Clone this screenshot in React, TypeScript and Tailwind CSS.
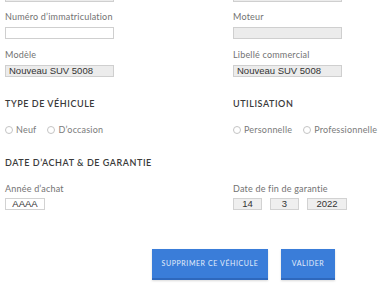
import React from "react";

const labelCls =
  "block h-[12px] leading-[12px] text-[9px] tracking-[0.2px] text-[#727272] font-['Lato',sans-serif]";
const headingCls =
  "h-[12px] leading-[12px] text-[9px] tracking-[0.55px] font-semibold text-[#3a3a3a] font-['Lato',sans-serif]";

const Field = ({
  label,
  value,
  disabled,
}: {
  label: string;
  value?: string;
  disabled?: boolean;
}) => (
  <div className="flex flex-col">
    <span className={labelCls}>{label}</span>
    <div
      className={`mt-[4px] h-[12px] w-[109px] border border-[#cfcfcf] pl-[3px] text-[9.5px] leading-[10px] text-[#333] font-['Liberation_Sans',Arial,sans-serif] ${
        disabled ? "bg-[#ececec]" : "bg-white"
      }`}
    >
      {value}
    </div>
  </div>
);

const Radio = ({ label }: { label: string }) => (
  <label className="flex items-center gap-[3px] text-[9px] tracking-[0.2px] text-[#7a7a7a] font-['Lato',sans-serif]">
    <span className="w-[8px] h-[8px] rounded-full border border-[#c4c4c4] bg-white" />
    {label}
  </label>
);

const SmallBox = ({ value, w }: { value: string; w: string }) => (
  <div
    className={`${w} h-[12px] border border-[#d2d2d2] bg-[#efefef] text-center text-[9.5px] leading-[10px] text-[#333] font-['Liberation_Sans',Arial,sans-serif]`}
  >
    {value}
  </div>
);

const App = () => {
  return (
    <div className="w-[383px] h-[300px] overflow-hidden bg-white">
      <div className="grid grid-cols-[228px_1fr] pl-[5px]">
        {/* left column */}
        <div className="flex flex-col">
          <div className="-mt-[10px] h-[12px] w-[109px] border border-[#cfcfcf] bg-[#ececec]" />
          <div className="mt-[9px]">
            <Field label="Numéro d’immatriculation" />
          </div>
          <div className="mt-[10px]">
            <Field label="Modèle" value="Nouveau SUV 5008" disabled />
          </div>
        </div>
        {/* right column */}
        <div className="flex flex-col">
          <div className="-mt-[10px] h-[12px] w-[109px] border border-[#cfcfcf] bg-[#ececec]" />
          <div className="mt-[9px]">
            <Field label="Moteur" disabled />
          </div>
          <div className="mt-[10px]">
            <Field label="Libellé commercial" value="Nouveau SUV 5008" disabled />
          </div>
        </div>

        <div className="mt-[21px]">
          <div className={headingCls}>TYPE DE VÉHICULE</div>
          <div className="mt-[14px] flex h-[12px] items-center gap-[11px]">
            <Radio label="Neuf" />
            <Radio label="D’occasion" />
          </div>
        </div>
        <div className="mt-[21px]">
          <div className={headingCls}>UTILISATION</div>
          <div className="mt-[14px] flex h-[12px] items-center gap-[11px]">
            <Radio label="Personnelle" />
            <Radio label="Professionnelle" />
          </div>
        </div>

        <div className="col-span-2 mt-[21px]">
          <div className={headingCls}>DATE D’ACHAT &amp; DE GARANTIE</div>
        </div>

        <div className="mt-[14px] flex flex-col">
          <span className={labelCls}>Année d’achat</span>
          <div className="mt-[3px]">
            <SmallBox value="AAAA" w="w-[40px] !bg-white" />
          </div>
        </div>
        <div className="mt-[14px] flex flex-col">
          <span className={labelCls}>Date de fin de garantie</span>
          <div className="mt-[3px] flex gap-[8px]">
            <SmallBox value="14" w="w-[29px]" />
            <SmallBox value="3" w="w-[29px]" />
            <SmallBox value="2022" w="w-[40px]" />
          </div>
        </div>
      </div>

      <div className="mt-[39px] flex gap-[13px] pl-[152px]">
        <button className="h-[31px] w-[116px] bg-[#3a7dd9] border-b-2 border-[#2e68bd] text-[7px] tracking-[0.6px] text-[#e3edfb] font-['Lato',sans-serif] shadow-[0_1px_2px_rgba(0,0,0,0.15)]">
          SUPPRIMER CE VÉHICULE
        </button>
        <button className="h-[31px] w-[54px] bg-[#3a7dd9] border-b-2 border-[#2e68bd] text-[7px] tracking-[0.6px] text-[#e3edfb] font-['Lato',sans-serif] shadow-[0_1px_2px_rgba(0,0,0,0.15)]">
          VALIDER
        </button>
      </div>
    </div>
  );
};

export default App;
